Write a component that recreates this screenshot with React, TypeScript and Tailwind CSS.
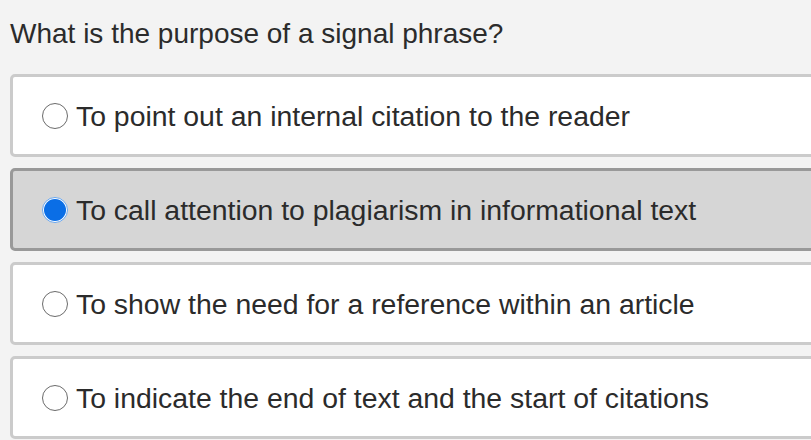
import React, { useState } from 'react';

const options = [
  'To point out an internal citation to the reader',
  'To call attention to plagiarism in informational text',
  'To show the need for a reference within an article',
  'To indicate the end of text and the start of citations',
];

export default function App() {
  const [selected, setSelected] = useState(1);

  return (
    <div
      className="h-[440px] w-[811px] overflow-hidden bg-[#f3f3f3] text-[#2b2b2b]"
      style={{ fontFamily: '"Liberation Sans", Arial, sans-serif' }}
    >
      <div className="pl-[10px] pt-[18px] text-[28px] leading-[32px]">What is the purpose of a signal phrase?</div>
      <div className="mt-[24px] flex w-[840px] flex-col gap-[11px] pl-[10px]">
        {options.map((text, i) => {
          const on = selected === i;
          return (
            <div
              key={i}
              onClick={() => setSelected(i)}
              className={`flex h-[83px] items-center rounded-[5px] border-[3px] pl-[29px] ${
                on ? 'border-[#999999] bg-[#d6d6d6]' : 'border-[#cbcbcb] bg-white'
              }`}
            >
              {on ? (
                <span className="flex h-[26px] w-[26px] shrink-0 items-center justify-center rounded-full border border-[#6aa7ef] bg-white">
                  <span className="h-[22px] w-[22px] rounded-full bg-[#0a6ee6]" />
                </span>
              ) : (
                <span className="h-[26px] w-[26px] shrink-0 rounded-full border-[1.5px] border-[#6b6b6b] bg-white" />
              )}
              <span className="ml-[8px] pt-[2px] text-[28.4px] leading-none">{text}</span>
            </div>
          );
        })}
      </div>
    </div>
  );
}
